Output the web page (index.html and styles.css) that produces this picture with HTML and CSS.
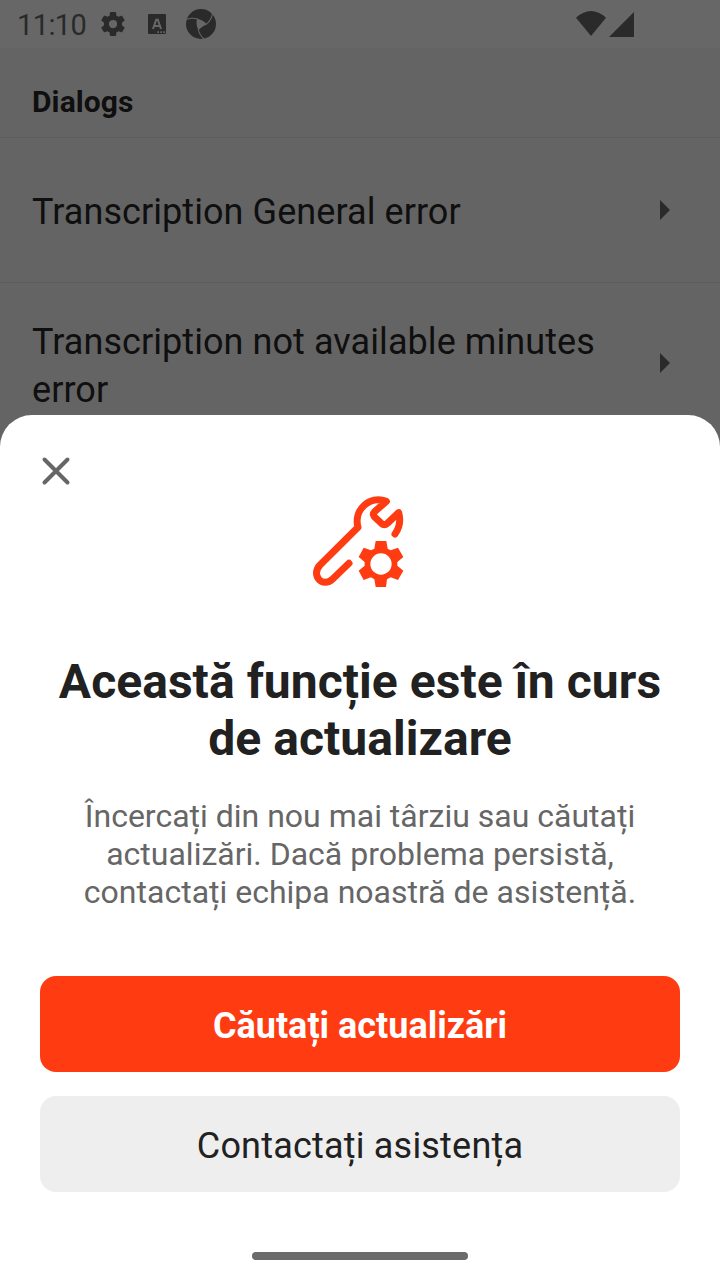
FILE: index.html
```
<!DOCTYPE html>
<html lang="ro">
<head>
<meta charset="utf-8">
<title>Dialogs</title>
<link rel="stylesheet" href="styles.css">
</head>
<body>
<div class="screen">
  <header class="status">
    <span class="clock">11:10</span>
    <svg class="status-gear" viewBox="0 0 24 24"><path d="M19.14 12.94c.04-.3.06-.61.06-.94 0-.32-.02-.64-.07-.94l2.03-1.58c.18-.14.23-.41.12-.61l-1.92-3.32c-.12-.22-.37-.29-.59-.22l-2.39.96c-.5-.38-1.03-.7-1.62-.94l-.36-2.54c-.04-.24-.24-.41-.48-.41h-3.84c-.24 0-.43.17-.47.41l-.36 2.54c-.59.24-1.13.57-1.62.94l-2.39-.96c-.22-.08-.47 0-.59.22L2.74 8.87c-.12.21-.08.47.12.61l2.03 1.58c-.05.3-.09.63-.09.94s.02.64.07.94l-2.03 1.58c-.18.14-.23.41-.12.61l1.92 3.32c.12.22.37.29.59.22l2.39-.96c.5.38 1.03.7 1.62.94l.36 2.54c.05.24.24.41.48.41h3.84c.24 0 .44-.17.47-.41l.36-2.54c.59-.24 1.13-.56 1.62-.94l2.39.96c.22.08.47 0 .59-.22l1.92-3.32c.12-.22.07-.47-.12-.61l-2.01-1.58zM12 15.3A3.3 3.3 0 1 1 12 8.7a3.3 3.3 0 0 1 0 6.6z"/></svg>
    <svg class="status-app" viewBox="0 0 54 60"><rect width="54" height="60" rx="4"/><path class="cut-line" d="M15 45L24.500 17h5L39 45M20 36h14"/><path class="cut" d="M28 52h5v5h-5zM37 52h5v5h-5zM46 52h5v5h-5z"/></svg>
    <svg class="status-swirl" viewBox="0 0 90 90"><circle cx="45" cy="45" r="45"/><path class="cut" d="M33 29Q51 33 64 46Q50 50 37 63Q29 47 33 29z"/><g class="swirl"><path d="M1 31Q17 24 36 30"/><path d="M1 31Q17 24 36 30" transform="rotate(120 45 45)"/><path d="M1 31Q17 24 36 30" transform="rotate(240 45 45)"/><path d="M79 82h7"/></g></svg>
    <span class="spacer"></span>
    <svg class="wifi" viewBox="0 0 90 75"><path d="M0 20Q45-20 90 20L45 75z"/></svg>
    <svg class="signal" viewBox="0 0 75 75"><path d="M75 0V75H0z"/></svg>
  </header>
  <main class="list">
    <h2 class="heading">Dialogs</h2>
    <div class="row first"><span>Transcription General error</span><svg class="arrow" viewBox="0 0 10 20"><path d="M0 0L10 10L0 20z"/></svg></div>
    <div class="row second"><span>Transcription not available minutes error</span><svg class="arrow" viewBox="0 0 10 20"><path d="M0 0L10 10L0 20z"/></svg></div>
  </main>
  <section class="sheet" role="dialog" aria-modal="true">
    <button class="close" aria-label="Închideți"><svg viewBox="0 0 28 28"><path d="M2.500 2.500L25.500 25.500M25.500 2.500L2.500 25.500"/></svg></button>
    <svg class="tools" viewBox="0 0 360 360">
      <path class="wrench" d="M285 162C299 143 302 120 296 98L262 130Q253 138 244 130L223 110Q217 102 224 95L259 64C208 45 160 90 174 142L60 255C31 286 68 326 98 297L147 250"/>
      <path class="cog" fill-rule="evenodd" d="M227 183H259L263 206L272 211L294 203L310 231L292 246V257L310 272L294 300L272 292L261 298L258 321H227L223 298L213 292L191 300L176 272L194 257V246L176 231L191 203L213 211L223 206zM243 220A32 32 0 1 0 243 284A32 32 0 1 0 243 220z"/>
    </svg>
    <h1 class="title">Această funcție este în curs<br>de actualizare</h1>
    <p class="copy">Încercați din nou mai târziu sau căutați<br>actualizări. Dacă problema persistă,<br>contactați echipa noastră de asistență.</p>
    <button class="button primary">Căutați actualizări</button>
    <button class="button secondary">Contactați asistența</button>
    <div class="home-bar"></div>
  </section>
</div>
</body>
</html>
```
FILE: styles.css
```
* { box-sizing: border-box; }
body { margin: 0; font-family: Roboto, "Liberation Sans", sans-serif; }
svg { display: block; flex: none; overflow: visible; }
.screen { position: relative; width: 720px; height: 1280px; overflow: hidden; background: #646464; color: #0f0f0f; }
.status { display: flex; height: 48px; padding-left: 17px; background: #676767; color: #2a2a2a; fill: #2a2a2a; }
.clock { width: 81px; font-size: 29px; line-height: 51px; letter-spacing: -.6px; }
.status-gear { width: 30px; height: 30px; margin-top: 9px; }
.status-app { width: 18px; height: 20px; margin: 14px 0 0 20px; }
.cut { fill: #676767; }
.cut-line { fill: none; stroke: #676767; stroke-width: 6; }
.status-swirl { width: 30px; height: 30px; margin: 9px 0 0 20px; }
.swirl { fill: none; stroke: #676767; stroke-width: 3; }
.spacer { flex: 1; }
.wifi { width: 30px; height: 25px; margin: 11px 3px 0 0; }
.signal { width: 25px; height: 25px; margin: 12px 86px 0 0; }
.heading { height: 90px; margin: 0; padding: 36px 32px 0; border-bottom: 1px solid #5c5c5c; font-size: 30px; line-height: 36px; font-weight: 700; letter-spacing: .1px; }
.row { display: flex; align-items: center; justify-content: space-between; padding: 0 50px 0 32px; font-size: 36px; line-height: 48px; letter-spacing: .07px; }
.row span { width: 590px; }
.first { height: 145px; padding-top: 4px; border-bottom: 1px solid #5c5c5c; }
.second { height: 166px; }
.arrow { width: 10px; height: 20px; fill: #2a2a2a; }
.first .arrow { margin-bottom: 4px; }
.second .arrow { margin-bottom: 6px; }
.sheet { position: absolute; inset: 415px 0 0; display: flex; flex-direction: column; padding: 0 40px; border-radius: 32px 32px 0 0; background: #fff; text-align: center; color: #212121; }
.close { align-self: flex-start; width: 28px; height: 28px; margin: 42px 0 0 2px; padding: 0; border: 0; background: none; }
.close svg { width: 28px; height: 28px; fill: none; stroke: #666; stroke-width: 4; stroke-linecap: round; }
.tools { width: 120px; height: 120px; margin: -5px auto 0; }
.wrench { fill: none; stroke: #ff3b12; stroke-width: 21; stroke-linecap: round; stroke-linejoin: round; }
.cog { fill: #ff3b12; }
.title { margin: 53px -20px 0; font-size: 48px; line-height: 57px; font-weight: 700; letter-spacing: .05px; }
.copy { margin: 30px 0 65px; color: #666; font-size: 32px; line-height: 38px; }
.button { height: 96px; flex: none; padding: 4px 0 0; border: 0; border-radius: 16px; font: 36px/48px Roboto, sans-serif; letter-spacing: .2px; color: #212121; background: #eee; }
.primary { margin-bottom: 24px; background: #ff3b12; color: #fff; font-weight: 700; letter-spacing: 0; }
.home-bar { width: 216px; height: 8px; margin: 60px auto 0; border-radius: 4px; background: #6b6b6b; }
```
